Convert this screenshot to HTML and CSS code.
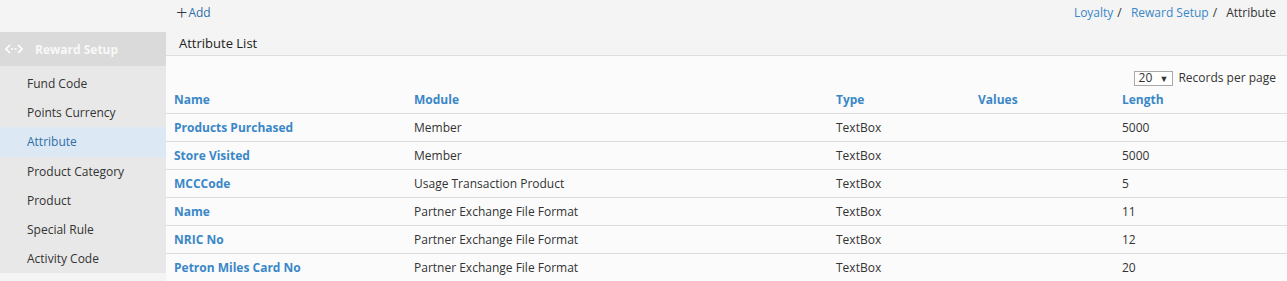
FILE: index.html
```html
<!DOCTYPE html>
<html lang="en">
  <head>
    <meta charset="UTF-8" />
    <title>Attribute</title>
    <link rel="stylesheet" href="styles.css">
  </head>
  <body>
    <div class="topbar">
      <a class="add-link" href="#"><span class="plus">+</span>Add</a>
      <div class="breadcrumb">
        <a href="#">Loyalty</a><span class="sep">/</span>
        <a href="#">Reward Setup</a><span class="sep">/</span>
        <span class="current">Attribute</span>
      </div>
    </div>

    <div class="layout">
      <div class="sidebar">
        <div class="side-head">
          <svg width="18" height="12" viewBox="0 0 18 12">
            <path d="M5 2 L1 6 L5 10 M13 2 L17 6 L13 10" fill="none" stroke="#fff" stroke-width="1.6"/>
            <path d="M6 6 H12" stroke="#fff" stroke-width="1.4" stroke-dasharray="2 1.5"/>
          </svg>
          <span>Reward Setup</span>
        </div>
        <ul class="side-menu">
          <li>Fund Code</li>
          <li>Points Currency</li>
          <li class="active">Attribute</li>
          <li>Product Category</li>
          <li>Product</li>
          <li>Special Rule</li>
          <li>Activity Code</li>
        </ul>
      </div>

      <div class="main">
        <div class="panel-head">Attribute List</div>
        <div class="pager">
          <span class="select">20 <span class="arrow">&#9660;</span></span>
          Records per page
        </div>
        <table class="grid">
          <thead>
            <tr>
              <th class="c-name">Name</th>
              <th class="c-module">Module</th>
              <th class="c-type">Type</th>
              <th class="c-values">Values</th>
              <th>Length</th>
            </tr>
          </thead>
          <tbody>
            <tr><td><a href="#">Products Purchased</a></td><td>Member</td><td>TextBox</td><td></td><td>5000</td></tr>
            <tr><td><a href="#">Store Visited</a></td><td>Member</td><td>TextBox</td><td></td><td>5000</td></tr>
            <tr><td><a href="#">MCCCode</a></td><td>Usage Transaction Product</td><td>TextBox</td><td></td><td>5</td></tr>
            <tr><td><a href="#">Name</a></td><td>Partner Exchange File Format</td><td>TextBox</td><td></td><td>11</td></tr>
            <tr><td><a href="#">NRIC No</a></td><td>Partner Exchange File Format</td><td>TextBox</td><td></td><td>12</td></tr>
            <tr><td><a href="#">Petron Miles Card No</a></td><td>Partner Exchange File Format</td><td>TextBox</td><td></td><td>20</td></tr>
          </tbody>
        </table>
      </div>
    </div>
  </body>
</html>
```

FILE: styles.css
```css
body {
  margin: 0;
  font-family: "Open Sans", "Noto Sans", sans-serif;
  font-size: 12px;
  color: #333;
  background-color: #f4f4f4;
}
a {
  color: #3a87c8;
  text-decoration: none;
}
.topbar {
  height: 32px;
  display: flex;
  align-items: flex-start;
  justify-content: space-between;
  padding: 4px 11px 0 176px;
  box-sizing: border-box;
}
.add-link {
  color: #2f6ea5;
  font-size: 12px;
  display: flex;
  align-items: center;
}
.plus {
  font-size: 20px;
  font-weight: 300;
  color: #2b3a4a;
  margin-right: 1px;
  line-height: 17px;
}
.breadcrumb {
  line-height: 17px;
}
.breadcrumb .sep {
  margin: 0 6px 0 4px;
  color: #333;
}
.breadcrumb .current {
  color: #333;
}
.layout {
  display: flex;
}
.sidebar {
  width: 166px;
  flex-shrink: 0;
}
.side-head {
  height: 34px;
  background-color: #dadada;
  display: flex;
  align-items: center;
  padding-left: 5px;
  color: #f8f8f8;
  font-weight: bold;
  font-size: 12px;
}
.side-head svg {
  margin-right: 12px;
}
.side-menu {
  list-style: none;
  margin: 0;
  padding: 3px 0 0;
  background-color: #e8e8e8;
}
.side-menu li {
  height: 29.2px;
  line-height: 29.2px;
  padding-left: 27px;
  color: #333;
}
.side-menu li.active {
  background-color: #dce9f5;
  color: #2f6ea5;
}
.main {
  flex: 1;
  background-color: #fbfbfb;
  height: 249px;
}
.panel-head {
  height: 23px;
  line-height: 23px;
  background-color: #f4f4f4;
  border-bottom: 1px solid #dedede;
  padding-left: 13px;
  font-size: 13px;
  color: #222;
}
.pager {
  text-align: right;
  padding: 13px 11px 0 0;
  height: 17px;
  color: #333;
}
.select {
  display: inline-block;
  border: 1px solid #a9a9a9;
  background: #fff;
  padding: 0 4px;
  line-height: 12px;
  margin-right: 2px;
}
.arrow {
  font-size: 9px;
  margin-left: 4px;
}
.grid {
  width: 100%;
  border-collapse: collapse;
}
.grid th {
  text-align: left;
  color: #3a87c8;
  font-weight: bold;
  height: 27px;
  padding: 0 0 0 8px;
  border-bottom: 1px solid #dcdcdc;
}
.grid td {
  height: 27px;
  padding: 0 0 0 8px;
  border-bottom: 1px solid #dcdcdc;
}
.grid td a {
  font-weight: bold;
}
.c-name {
  width: 232px;
}
.c-module {
  width: 414px;
}
.c-type {
  width: 134px;
}
.c-values {
  width: 136px;
}
```
